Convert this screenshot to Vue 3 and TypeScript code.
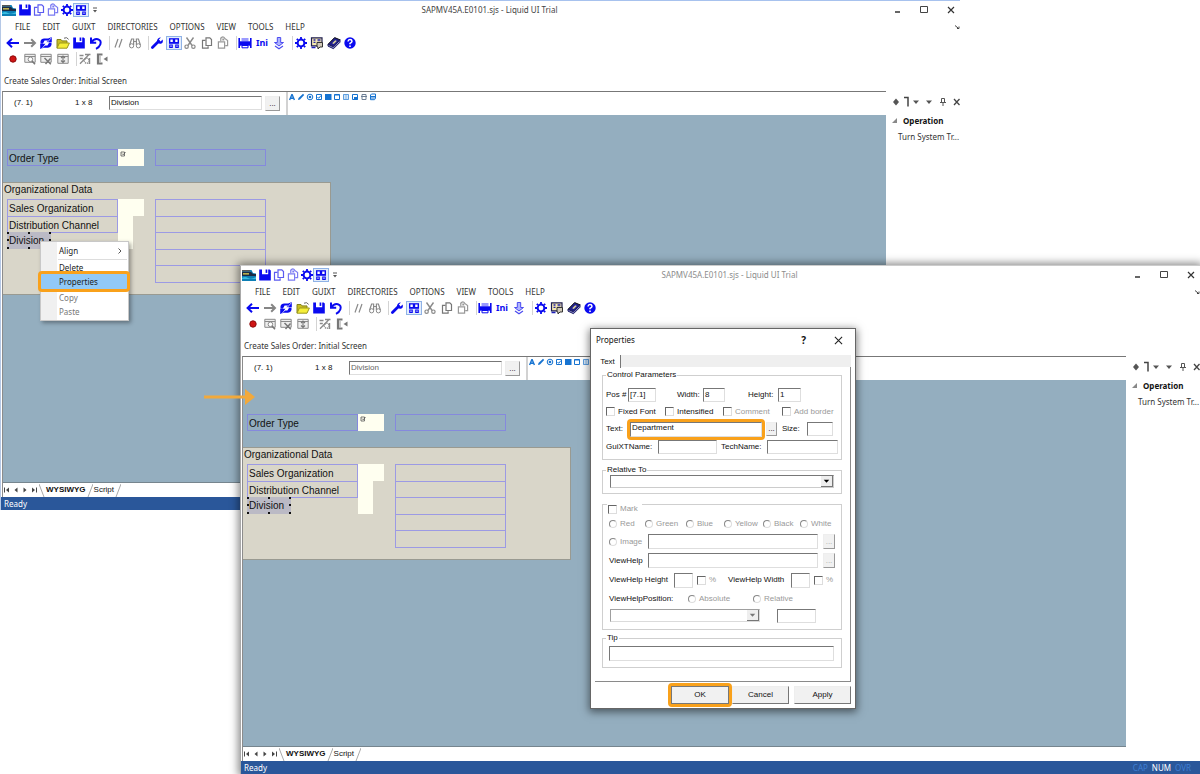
<script setup lang="ts">
import { reactive, ref } from 'vue'

interface AppWindow {
  id: string
  menuOpen: boolean
}

interface FormRow {
  label: string
  size: string
  selected?: boolean
}

const windows: AppWindow[] = [
  { id: 'back', menuOpen: true },
  { id: 'front', menuOpen: false },
]

const menus = ['FILE', 'EDIT', 'GUIXT', 'DIRECTORIES', 'OPTIONS', 'VIEW', 'TOOLS', 'HELP']

const B = '#0a0af0'
const G = '#8a8a8a'

const gear = `<circle cx="8" cy="8" r="3.4" fill="none" stroke="${B}" stroke-width="2"/><path d="M8 2v2M8 12v2M2 8h2M12 8h2M3.8 3.8l1.3 1.3M10.9 10.9l1.3 1.3M3.8 12.2l1.3-1.3M10.9 5.1l1.3-1.3" stroke="${B}" stroke-width="1.8"/>`
const save = `<path d="M2.2 2.500h2.800v4.800h6.200V2.500h1.400l1.200 1v10H2.200z" fill="${B}"/><path d="M8.600 2.500h1.700v3.400H8.600z" fill="${B}"/>`
const copy = (c: string) => `<path d="M7 2.800h3.800l1.700 1.700v6H7z" fill="none" stroke="${c}" stroke-width="1.200"/><path d="M6.500 5.300h-3v7.900h5.600v-2" fill="none" stroke="${c}" stroke-width="1.200"/>`
const paste = (c: string) => `<path d="M5.800 6.200V4.600a2 2 0 0 1 4-1.100l2.800 2v5.200h-2.400" fill="none" stroke="${c}" stroke-width="1.200"/><path d="M3.400 6.800h6.200v6.400H3.400z" fill="none" stroke="${c}" stroke-width="1.200"/><path d="M7.300 3.500h2v2h-2z" fill="${c}"/>`
const grid = `<rect x=".5" y="1.500" width="15" height="13" fill="#e3edfb" stroke="#8fb2e6"/><path d="M3 3.200h10v5.600H3z" fill="${B}"/><path d="M4.400 4.600h2.400v2.400H4.400zM9.200 4.600h2.400v2.400H9.200z" fill="#fff"/><path d="M3.800 10h2.400v2.400H3.800zM9.800 10h2.400v2.400H9.800z" fill="#fff" stroke="${B}" stroke-width="1.200"/>`

const icons: Record<string, string> = {
  app: '<path d="M1 3h14v11H1z" fill="#0d7fb5"/><path d="M1 3h8v1.600H1z" fill="#555"/><path d="M1 5h9l2 2h3v2H1z" fill="#1b2b45"/><path d="M2 6.200h6v1.300H2z" fill="#e3d04f"/><path d="M10.500 3H15v3.500l-3-.5z" fill="#fff"/><path d="M1 11q3-2 6 0t8-1v2H1z" fill="#38bde0"/>',
  save,
  copyBlue: copy('#5b5bf0'),
  pasteBlue: paste('#7a7af2'),
  gear,
  grid,
  back: `<path d="M2 8h12M7 3.800L2.600 8 7 12.200" fill="none" stroke="${B}" stroke-width="2"/>`,
  forward: '<path d="M2 8h11M9.200 4.200L13 8l-3.800 3.800" fill="none" stroke="#858585" stroke-width="2"/>',
  refresh: `<path d="M2.500 8.500V6.200Q3.200 3.500 6.200 3.500h4L13.800 2v5.300H8.400L10 5.600H6.600L5 8.500zM13.500 7.800v2.200q-.8 2.700-3.500 2.700H6L2.200 14V8.800h5.400L6 10.500h3.400l1.700-2.700z" fill="${B}"/><path d="M3.500 14L13.500 2.600" stroke="#fff" stroke-width=".7"/>`,
  open: '<path d="M2 13V4.500h4l1 1.400h5v2" fill="#c9bd22" stroke="#84821a"/><path d="M2 13.200L4.400 8h10L12 13.200z" fill="#f5ee39" stroke="#9b971f"/><path d="M9 3.200q3-1.600 4.600 1.200" fill="none" stroke="#666"/>',
  undo: `<path d="M3 2.500v5.200h5.200M3.400 7.200Q6 3.400 9.800 4.200q3.800 1.200 2.600 5Q11.400 12.200 8 13.800" fill="none" stroke="${B}" stroke-width="2"/>`,
  comment: '<path d="M5 12.500L8 4M9 12.500L12 4" stroke="#8a8a8a" stroke-width="1.200"/>',
  binoculars: `<path d="M2.600 10l2-6h2v6M13.400 10l-2-6h-2v6M6.600 6.500h2.800" fill="none" stroke="${G}" stroke-width="1.200"/><circle cx="4.600" cy="10.800" r="2.100" fill="none" stroke="${G}"/><circle cx="11.400" cy="10.800" r="2.100" fill="none" stroke="${G}"/>`,
  wrench: `<path d="M3.400 12.600l6-6" stroke="${B}" stroke-width="2.800" stroke-linecap="round"/><path d="M12 2.400L9.900 4.600l1.600 1.800 2.200-2q.8 3.600-1.900 4.400-3 .4-3.800-2.200Q7.800 2.600 12 2.400z" fill="${B}"/>`,
  cut: `<path d="M4.500 2.500l5.600 8M11.500 2.500l-5.600 8" stroke="${G}" stroke-width="1.400"/><circle cx="4.600" cy="11.700" r="1.700" fill="none" stroke="${G}" stroke-width="1.200"/><circle cx="11.400" cy="11.700" r="1.700" fill="none" stroke="${G}" stroke-width="1.200"/>`,
  copyGray: copy('#777'),
  pasteGray: paste('#999'),
  print: `<path d="M2.200 3v10M13.800 3v10" stroke="${B}" stroke-width="1.600"/><path d="M4.500 3h7v3.500h-7z" fill="#9a9aff"/><path d="M2 6.300h12v4.400H2z" fill="${B}"/><path d="M5 10.500h6v2.300H5z" fill="#fff" stroke="${B}"/>`,
  download: '<path d="M6.300 2.500h3.400v5h2.800L8 11 3.500 7.500h2.800z" fill="#aeb4ff" stroke="#4b4bf0"/><path d="M4 11l4 2.800 4-2.800" fill="none" stroke="#4b4bf0" stroke-width="1.200"/>',
  guide: '<path d="M2.500 2.800h10.500v8H2.500z" fill="#f5e9b0" stroke="#1d1d50" stroke-width="1.200"/><path d="M4.500 5h2M8.500 5h3M4.500 7.300h2M8.500 7.300h3" stroke="#2323a8" stroke-width="1.300"/><path d="M8 7.500h5.500v4.500H11l-2 2v-2H8z" fill="#d0c8b8" stroke="#333"/><path d="M2.500 12.500h4" stroke="#1f1fb8" stroke-width="1.500"/>',
  book: '<path d="M2 9.300L8.600 2.600l5.400 2.200-6.500 7z" fill="#20208c" stroke="#111"/><path d="M2 9.300v1.800l5.500 2.600L14 7.200V4.800l-6.500 7z" fill="#8d8dd0" stroke="#1a1a60"/><path d="M6.200 8.200l3-3 1.600.800-3 3.100z" fill="#d8cf9a"/>',
  help: `<circle cx="8" cy="8" r="5.700" fill="${B}"/><path d="M6 6.500q.2-1.900 2-1.900t2 1.600q0 1-2 2.200v.9" fill="none" stroke="#fff" stroke-width="1.500"/><path d="M7.200 10.400h1.600V12H7.200z" fill="#fff"/>`,
  record: '<circle cx="8" cy="8" r="3.200" fill="#cf1414" stroke="#8d0b0b"/>',
  find: `<path d="M2.800 3.300h10.400v8H2.800zM2.800 5.500h10.400" fill="#eee" stroke="${G}"/><circle cx="8.400" cy="8.300" r="2.300" fill="#fff" stroke="${G}"/><path d="M10 10l3 3.300" stroke="#777" stroke-width="1.600"/>`,
  findDel: `<path d="M2.800 3.300h10.400v8H2.800zM2.800 5.500h10.400" fill="#eee" stroke="${G}"/><path d="M6.500 7l6.300 6.300M12.500 7.500l-5 5.500" stroke="#777" stroke-width="1.500"/>`,
  transfer: `<path d="M2.800 3.300h10.400v9H2.800zM2.800 5.500h10.400" fill="#eee" stroke="${G}"/><path d="M8 5v6M6 7l2-2 2 2M6 9.500l2 2 2-2" fill="none" stroke="#777" stroke-width="1.100"/>`,
  macro: `<path d="M2.500 4.500h4M8 3.500h5.500M3 12.800L12.500 3" stroke="${G}" stroke-width="1.300"/><circle cx="9.800" cy="9.800" r="2.500" fill="none" stroke="${G}" stroke-width="1.400" stroke-dasharray="1.400 .8"/><path d="M2.800 7.500h3M12.500 7v6" stroke="${G}" stroke-width="1.400"/>`,
  exit: '<path d="M8.500 3.500H4v9h4.500" fill="none" stroke="#777" stroke-width="2.200"/><path d="M13.500 5.500v5L9.500 8z" fill="#777"/><path d="M5 5h2v6H5z" fill="#ccc"/>',
}

const quickIcons = ['save', 'copyBlue', 'pasteBlue', 'gear', 'grid']
const labels: Record<string, string> = {
  save: 'Save', copyBlue: 'Copy', pasteBlue: 'Paste', gear: 'Settings', grid: 'Designer',
  back: 'Back', forward: 'Forward', refresh: 'Refresh', open: 'Open', undo: 'Undo',
  comment: 'Comment', binoculars: 'Find', wrench: 'Tools', cut: 'Cut', copyGray: 'Copy',
  pasteGray: 'Paste', print: 'Print', ini: 'Ini', download: 'Download', guide: 'Guide',
  book: 'Book', help: 'Help', record: 'Record', find: 'Inspect', findDel: 'Remove',
  transfer: 'Transfer', macro: 'Macro', exit: 'Exit',
}

const mainGroups = [
  { cls: 'w6', items: ['back', 'forward', 'refresh', 'open', 'save', 'undo'] },
  { cls: 'w2', items: ['comment', 'binoculars'] },
  { cls: 'w5', items: ['wrench', 'grid', 'cut', 'copyGray', 'pasteGray'] },
  { cls: 'w3', items: ['print', 'ini', 'download'] },
  { cls: 'w4', items: ['gear', 'guide', 'book', 'help'] },
]
const secondGroups = [
  { cls: 'w4', items: ['record', 'find', 'findDel', 'transfer'] },
  { cls: 'w2', items: ['macro', 'exit'] },
]

const controlIcons = [
  '<path d="M4 1.200L1.600 7M4 1.200L6.400 7M2.500 5.200h3" fill="none" stroke="currentColor" stroke-width="1.400"/>',
  '<path d="M1 7l.5-2L6 .8 7.200 2 3 6.500z"/>',
  '<circle cx="4" cy="4" r="2.800" fill="none" stroke="currentColor"/><circle cx="4" cy="4" r="1.300"/>',
  '<path d="M1.500 1.500h5v5h-5zM2.500 4l1.200 1.300L6 2.500" fill="none" stroke="currentColor"/>',
  '<path d="M1 1h6.500v6H1z"/>',
  '<path d="M1.500 1.500h5v5h-5zM1.500 2h5" fill="none" stroke="currentColor"/>',
  '<path d="M1.500 1.500h5v5h-5zM2.500 3h3M2.500 5h3" fill="none" stroke="currentColor" stroke-width=".7"/>',
  '<path d="M1.500 1.500h5v5h-5z" fill="none" stroke="currentColor"/><path d="M3 4h4v2.500H3z"/>',
  '<path d="M2 1.500h4v5H2zM1 3.500h6" fill="none" stroke="#6d7f95"/>',
  '<path d="M1.500 2l1-1h4v4.500l-1 1.200h-4zM2 3.500h4M2 5h4" fill="none" stroke="currentColor"/>',
]

const rows: FormRow[] = [
  { label: 'Sales Organization', size: 'wide' },
  { label: 'Distribution Channel', size: 'narrow' },
  { label: 'Division', size: 'narrow', selected: true },
  { label: '', size: '' },
  { label: '', size: '' },
]

const handles = ['tl', 'tc', 'tr', 'ml', 'mr', 'bl', 'bc', 'br']
const elementText = reactive<Record<string, string>>({ back: 'Division', front: 'Division' })
const props = reactive({ pos: '[7.1]', width: '8', height: '1', text: 'Department' })
const colours = ['Red', 'Green', 'Blue', 'Yellow', 'Black', 'White']
const flags = ref([
  { label: 'Fixed Font', off: false },
  { label: 'Intensified', off: false },
  { label: 'Comment', off: true },
  { label: 'Add border', off: true },
])
</script>

<template>
  <main class="desktop">
    <section v-for="w in windows" :key="w.id" class="window" :class="w.id">
      <header class="titlebar">
        <svg class="ico" viewBox="0 0 16 16" v-html="icons.app"></svg>
        <button v-for="q in quickIcons" :key="q" class="tool" :aria-label="labels[q]">
          <svg class="ico" viewBox="0 0 16 16" v-html="icons[q]"></svg>
        </button>
        <svg class="more" viewBox="0 0 6 6"><path d="M1 1h4" stroke="#555" /><path d="M1 3h4L3 5.500z" fill="#555" /></svg>
        <h1 class="title">SAPMV45A.E0101.sjs - Liquid UI Trial</h1>
        <div class="controls">
          <button aria-label="Minimize"><svg viewBox="0 0 12 12"><path d="M4 8h5" stroke="#333" stroke-width="1.500" /></svg></button>
          <button aria-label="Maximize"><svg viewBox="0 0 12 12"><path d="M2.500 2.500h7v6h-7z" fill="none" stroke="#444" /></svg></button>
          <button aria-label="Close"><svg viewBox="0 0 12 12"><path d="M3 3l6 6M9 3L3 9" stroke="#333" stroke-width="1.200" /></svg></button>
        </div>
      </header>
      <nav class="menubar">
        <button v-for="m in menus" :key="m">{{ m }}</button>
        <svg class="fold" viewBox="0 0 6 6"><path d="M1 1.500l3 2.500M5 2.500v2H3" fill="none" stroke="#444" /></svg>
      </nav>
      <div class="toolbar">
        <div v-for="(g, i) in mainGroups" :key="i" class="tools" :class="g.cls">
          <button v-for="t in g.items" :key="t" class="tool" :aria-label="labels[t]">
            <b v-if="t === 'ini'">Ini</b>
            <svg v-else class="ico" viewBox="0 0 16 16" v-html="icons[t]"></svg>
          </button>
        </div>
      </div>
      <div class="toolbar">
        <div v-for="(g, i) in secondGroups" :key="i" class="tools" :class="g.cls">
          <button v-for="t in g.items" :key="t" class="tool" :aria-label="labels[t]">
            <svg class="ico" viewBox="0 0 16 16" v-html="icons[t]"></svg>
          </button>
        </div>
      </div>
      <p class="caption">Create Sales Order: Initial Screen</p>

      <div class="workspace">
        <div class="editor">
          <div class="elementbar">
            <span class="coord">(7. 1)</span>
            <span class="dims">1 x 8</span>
            <input v-model="elementText[w.id]" class="sunken elname" aria-label="Element text" />
            <button class="raised dots">...</button>
            <div class="palette">
              <svg v-for="(c, i) in controlIcons" :key="i" viewBox="0 0 8 8" fill="currentColor" v-html="c"></svg>
            </div>
          </div>
          <div class="canvas">
            <div class="order">
              <span class="cell">Order Type</span>
              <span class="entry wide"><svg viewBox="0 0 6 6"><path d="M1 1h3.500v4H1zM2 2.500l1.200 1.300L5.500 1" fill="none" stroke="#555" stroke-width=".8" /></svg></span>
              <span class="cell out"></span>
            </div>
            <section class="orgdata">
              <h2>Organizational Data</h2>
              <div class="grid">
                <template v-for="(r, i) in rows" :key="i">
                  <span v-if="r.selected" class="selected">{{ r.label }}<i v-for="h in handles" :key="h" :class="h"></i></span>
                  <span v-else-if="r.label" class="cell">{{ r.label }}</span>
                  <span v-else></span>
                  <span :class="r.size ? ['entry', r.size] : ''"></span>
                  <span class="cell out"></span>
                </template>
              </div>
            </section>
          </div>
          <div class="sheets">
            <button aria-label="First"><svg viewBox="0 0 8 8"><path d="M1.500 1.500v5" stroke="#444" /><path d="M6 1.500v5L3 4z" fill="#444" /></svg></button>
            <button aria-label="Previous"><svg viewBox="0 0 8 8"><path d="M5.500 1.500v5L2.500 4z" fill="#444" /></svg></button>
            <button aria-label="Next"><svg viewBox="0 0 8 8"><path d="M2.500 1.500v5L5.500 4z" fill="#444" /></svg></button>
            <button aria-label="Last"><svg viewBox="0 0 8 8"><path d="M2 1.500v5L5 4z" fill="#444" /><path d="M6.500 1.500v5" stroke="#444" /></svg></button>
            <svg class="edge" viewBox="0 0 6 13"><path d="M0 0l5 13" stroke="#aaa" /></svg>
            <button class="sheet on">WYSIWYG</button>
            <svg class="edge" viewBox="0 0 6 13"><path d="M6 0L1 13" stroke="#aaa" /></svg>
            <button class="sheet">Script</button>
            <svg class="edge" viewBox="0 0 6 13"><path d="M6 0L1 13" stroke="#aaa" /></svg>
          </div>
        </div>
        <aside class="side">
          <div class="sidebar">
            <svg viewBox="0 0 72 12">
              <path d="M7 2.500l3 3.500-3 3.500L4 6z" fill="#555" />
              <path d="M15 1.500h4v9" fill="none" stroke="#444" stroke-width="1.500" />
              <path d="M24 4.500h6L27 8zM37 4.500h6L40 8z" fill="#555" />
              <path d="M52.500 2.500h3v4h-3zM51 6.500h6M54 6.500v3.500" fill="none" stroke="#555" />
              <path d="M65 3l5.500 6M70.500 3L65 9" stroke="#444" stroke-width="1.300" />
            </svg>
          </div>
          <h3><svg viewBox="0 0 6 6"><path d="M6 0v6H0z" fill="#888" /></svg>Operation</h3>
          <p>Turn System Tr...</p>
        </aside>
      </div>
      <footer class="status">
        <span>Ready</span>
        <span class="keys"><i>CAP</i><span>NUM</span><i>OVR</i></span>
      </footer>

      <div v-if="w.menuOpen" class="context">
        <button class="item">Align<svg viewBox="0 0 6 8"><path d="M1.500 1.500L4 4 1.500 6.500" fill="none" stroke="#555" /></svg></button>
        <button class="item cutoff">Delete</button>
        <button class="item hot">Properties</button>
        <button class="item off">Copy</button>
        <button class="item off">Paste</button>
      </div>
    </section>

    <svg class="arrow" viewBox="0 0 52 18"><path d="M0 9h43" stroke="#f2a93b" stroke-width="3" /><path d="M41 1l10 8-10 8z" fill="#f2a93b" /></svg>

    <form class="dialog" @submit.prevent>
      <header>
        <h2>Properties</h2>
        <button type="button" class="q">?</button>
        <button type="button" aria-label="Close"><svg viewBox="0 0 10 10"><path d="M1 1l8 8M9 1L1 9" stroke="#222" stroke-width="1.200" /></svg></button>
      </header>
      <div class="tabstrip"><button type="button">Text</button></div>
      <div class="page">
        <fieldset class="params">
          <legend>Control Parameters</legend>
          <div class="line pos">
            <label for="p-pos">Pos #</label><input id="p-pos" v-model="props.pos" class="sunken" />
            <label for="p-w">Width:</label><input id="p-w" v-model="props.width" class="sunken" />
            <label for="p-h">Height:</label><input id="p-h" v-model="props.height" class="sunken" />
          </div>
          <div class="line checks">
            <label v-for="f in flags" :key="f.label" :class="{ dim: f.off }"><input type="checkbox" :disabled="f.off" />{{ f.label }}</label>
          </div>
          <div class="line text">
            <label for="p-text">Text:</label>
            <span class="ring"><input id="p-text" v-model="props.text" class="sunken" /></span>
            <button type="button" class="raised">...</button>
            <label for="p-size">Size:</label><input id="p-size" class="sunken" />
          </div>
          <div class="line names">
            <label for="p-gx">GuiXTName:</label><input id="p-gx" class="sunken" />
            <label for="p-tn">TechName:</label><input id="p-tn" class="sunken" />
          </div>
        </fieldset>
        <fieldset class="relative">
          <legend>Relative To</legend>
          <div class="drop"><select aria-label="Relative To"><option></option></select><svg viewBox="0 0 12 10"><path d="M3 3.500h6L6 7z" /></svg></div>
        </fieldset>
        <fieldset class="marks">
          <legend class="marklegend"><label class="dim"><input type="checkbox" disabled />Mark</label></legend>
          <div class="line colours">
            <label v-for="c in colours" :key="c" class="dim"><input type="radio" name="colour" disabled />{{ c }}</label>
          </div>
          <div class="line file">
            <label class="dim"><input type="radio" name="colour" disabled />Image</label>
            <input class="sunken" aria-label="Image" disabled /><button type="button" class="raised" disabled>...</button>
          </div>
          <div class="line file">
            <label for="p-vh">ViewHelp</label>
            <input id="p-vh" class="sunken" /><button type="button" class="raised" disabled>...</button>
          </div>
          <div class="line size">
            <label for="p-vhh">ViewHelp Height</label><input id="p-vhh" class="sunken" />
            <label class="dim"><input type="checkbox" disabled />%</label>
            <label for="p-vhw">ViewHelp Width</label><input id="p-vhw" class="sunken" />
            <label class="dim"><input type="checkbox" disabled />%</label>
          </div>
          <div class="line where">
            <span>ViewHelpPosition:</span>
            <label class="dim"><input type="radio" name="where" disabled />Absolute</label>
            <label class="dim"><input type="radio" name="where" disabled />Relative</label>
          </div>
          <div class="line anchor">
            <div class="drop"><select aria-label="ViewHelp position" disabled><option></option></select><svg viewBox="0 0 12 10"><path d="M3 3.500h6L6 7z" fill="#777" /></svg></div>
            <input class="sunken" aria-label="Offset" />
          </div>
        </fieldset>
        <fieldset class="tip">
          <legend>Tip</legend>
          <input class="sunken" aria-label="Tip" />
        </fieldset>
      </div>
      <div class="actions">
        <span class="ring"><button class="raised">OK</button></span>
        <button type="button" class="raised">Cancel</button>
        <button type="button" class="raised">Apply</button>
      </div>
    </form>
  </main>
</template>

<style>
body { margin: 0; background: #fff; }
</style>

<style scoped>
.desktop, .desktop * { box-sizing: border-box; }
.desktop {
  position: relative;
  min-height: 100vh;
  overflow: hidden;
  background: #fff;
  font-family: "Noto Sans", sans-serif;
  font-size: 8px;
  line-height: 12px;
  color: #333;
}
button { margin: 0; padding: 0; border: 0; background: none; font: inherit; color: inherit; }
h1, h2, h3, p { margin: 0; font: inherit; }
svg { display: block; flex: none; }
i { font-style: normal; }

.window { position: absolute; display: flex; flex-direction: column; background: #fff; }
.back { left: 0; top: 0; right: 20%; bottom: 264px; border-top: 1px solid #a7c2ee; border-left: 1px solid #b5c8e6; }
.front { left: 20%; top: 265px; right: 0; bottom: 0; border-top: 1px solid #ccc; border-left: 1px solid #a9a9a9; box-shadow: 0 0 8px 2px rgba(0, 0, 0, 0.45); }

.titlebar { display: flex; align-items: center; height: 17px; padding: 0 3px 0 0; }
.ico { width: 16px; height: 16px; }
.tool { display: flex; align-items: center; justify-content: center; width: 14px; height: 16px; }
.titlebar .tool:nth-of-type(1) { margin-left: 1px; }
.more { width: 6px; height: 6px; margin-left: 4px; }
.title { flex: 1; text-align: center; padding-right: 10px; }
.back .title { color: #444; }
.front .title { color: #8c8c8c; }
.controls { display: flex; gap: 15px; }
.controls svg { width: 12px; height: 12px; }

.menubar { display: flex; align-items: center; gap: 12px; height: 17px; padding-left: 14px; }
.fold { width: 6px; height: 6px; margin-left: auto; }

.toolbar { display: flex; height: 16px; align-items: center; padding-left: 4px; }
.tools { display: flex; justify-content: space-between; height: 14px; align-items: center; }
.tools .tool { width: 16px; }
.tools + .tools { margin-left: 5px; border-left: 1px solid #d3d3d3; }
.w6 { width: 99px; }
.w5 { width: 83px; }
.w4 { width: 66px; }
.w3 { width: 51px; }
.w2 { width: 34px; }
.tool b { color: #0a0af0; font-size: 9px; line-height: 14px; }
.caption { height: 24px; padding: 8px 0 0 3px; }

.workspace { display: flex; flex: 1; min-height: 0; }
.editor { display: flex; flex: 1; flex-direction: column; min-width: 0; margin-left: 1px; border-left: 1px solid #8c8c8c; border-top: 1px solid #777; }
.elementbar { display: flex; height: 23px; flex: none; background: #fff; font-family: "Liberation Sans", sans-serif; color: #111; }
.coord { width: 61px; padding: 5px 0 0 11px; }
.dims { width: 45px; padding: 5px 0 0 11px; }
.sunken { min-width: 0; margin: 0; padding: 0 1px; background: #fff; border: 1px solid #dedede; border-top-color: #777; border-left-color: #777; border-radius: 0; font: 8px/10px "Liberation Sans", sans-serif; color: #111; outline: 0; }
.elname { width: 153px; height: 14px; margin-top: 4px; padding-bottom: 2px; }
.front .elname { color: #666; }
.raised { background: #f1f1f1; border: 1px solid #999; border-top-color: #eee; border-left-color: #eee; line-height: 8px; }
.dots { width: 15px; height: 15px; margin: 4px 0 0 3px; }
.palette { display: flex; gap: 1px; margin-left: 6px; padding: 1px 0 0 0; border-left: 2px solid #d2d2d2; color: #1673d1; }
.palette svg { width: 8px; height: 8px; }

.canvas { flex: 1; min-height: 0; padding-top: 34px; overflow: hidden; background: #94aebf; border-bottom: 1px solid #76858e; font: 10px/17px "Liberation Sans", sans-serif; color: #111; }
.order { display: grid; grid-template-columns: 111px 37px 111px; grid-template-rows: 17px; margin-left: 4px; }
.cell { border: 1px solid #8589dd; padding-left: 1px; white-space: nowrap; }
.entry { background: #fffff0; }
.entry svg { width: 6px; height: 6px; margin: 2px 0 0 2px; }
.wide { width: 26px; }
.narrow { width: 15px; }
.orgdata { width: 328px; height: 113px; margin-top: 16px; background: #d9d6c9; border: 1px solid #999a91; border-left: 0; }
.orgdata h2 { height: 16px; padding-left: 1px; line-height: 13px; }
.grid { display: grid; grid-template-columns: 111px 37px 111px; grid-template-rows: repeat(5, minmax(0, 1fr)); height: 83px; margin-left: 4px; }
.grid .cell { margin-bottom: -1px; border-color: #9c9ae4; }
.selected { position: relative; width: 44px; padding-left: 2px; background: #bbbac5; }
.selected i { position: absolute; width: 2px; height: 2px; background: #111; }
.tl { left: 0; top: 0; }
.tc { left: 21px; top: 0; }
.tr { right: 0; top: 0; }
.ml { left: 0; top: 7px; }
.mr { right: 0; top: 7px; }
.bl { left: 0; bottom: 0; }
.bc { left: 21px; bottom: 0; }
.br { right: 0; bottom: 0; }

.sheets { display: flex; align-items: center; height: 14px; flex: none; font-family: "Liberation Sans", sans-serif; color: #111; }
.sheets button { width: 9px; }
.sheets button svg { width: 8px; height: 8px; }
.sheets .sheet { width: auto; padding: 0 1px; }
.sheets .on { font-weight: bold; }
.edge { width: 6px; height: 13px; }

.side { width: 74px; flex: none; padding: 5px 0 0 6px; white-space: nowrap; }
.sidebar svg { width: 72px; height: 12px; margin-left: -3px; }
.side h3 { display: flex; align-items: center; gap: 6px; height: 15px; margin-top: 5px; font-weight: bold; color: #111; }
.side h3 svg { width: 5px; height: 5px; }
.side p { padding: 3px 0 0 6px; }

.status { display: flex; justify-content: space-between; align-items: center; height: 13px; flex: none; padding: 0 9px 0 3px; background: #2a579a; color: #fff; }
.keys { display: flex; gap: 4px; }
.back .keys { display: none; }
.keys i { color: #3f7fd4; }

.context { position: absolute; left: 39px; top: 240px; display: flex; flex-direction: column; width: 89px; padding: 1px; background: linear-gradient(90deg, #f0f0f0 16px, #fff 16px); border: 1px solid #c8c8c8; box-shadow: 2px 2px 4px rgba(0, 0, 0, 0.35); color: #222; }
.item { display: flex; align-items: center; justify-content: space-between; height: 15px; padding: 0 4px 0 17px; text-align: left; }
.item svg { width: 6px; height: 8px; }
.cutoff { height: 14px; margin: 1px 0 0 16px; padding: 3px 0 0 1px; border-top: 1px solid #ddd; }
.hot { position: relative; height: 21px; margin: -2px -3px -1px -4px; padding-left: 18px; background: #91c9f7; border: 3px solid #f9a11b; border-radius: 4px; }
.off { height: 14px; color: #777; }

.arrow { position: absolute; left: 204px; top: 388px; width: 52px; height: 18px; }

.dialog { position: absolute; left: 590px; top: 328px; width: 266px; padding: 0 4px 1px 4px; background: #fff; border: 1px solid #666; box-shadow: 0 2px 8px 1px rgba(0, 0, 0, 0.5); font-family: "Liberation Sans", sans-serif; line-height: 10px; color: #111; }
.dialog header { display: flex; align-items: center; height: 26px; padding: 0 8px 4px 1px; font-family: "Noto Sans", sans-serif; }
.dialog header h2 { flex: 1; }
.dialog header svg { width: 9px; height: 9px; }
.q { margin-right: 28px; font-size: 10px; font-weight: bold; }
.tabstrip { height: 12px; background: #efefef; }
.tabstrip button { display: block; width: 26px; height: 13px; background: #fff; border-right: 1px solid #777; text-align: center; }
.page { padding: 3px 8px 13px 7px; border-right: 1px solid #8a8a8a; border-bottom: 1px solid #8a8a8a; }
fieldset { min-width: 0; margin: 0; padding: 0; border: 1px solid #cfcfcf; }
legend { height: 10px; padding: 0 1px; }
.line { display: grid; grid-template-rows: 100%; align-items: center; white-space: nowrap; }
.dialog label { display: flex; align-items: center; }
.dim { color: #999; }
input[type="checkbox"], input[type="radio"] { appearance: none; width: 9px; height: 9px; margin: 0 3px 0 0; flex: none; border: 1px solid #ddd; border-top-color: #666; border-left-color: #666; background: #fff; }
input[type="radio"] { width: 8px; height: 8px; border-radius: 50%; border-color: #888 #ddd #ddd #888; }
.params { padding: 7px 5px 3px 3px; }
.pos { grid-template-columns: 22px 49px 26px 45px 30px 23px; height: 16px; }
.pos .sunken { height: 14px; padding-bottom: 2px; }
.pos .sunken:nth-of-type(1) { width: 28px; }
.pos .sunken:nth-of-type(2) { width: 22px; }
.checks { grid-template-columns: 59px 58px 59px 1fr; height: 17px; }
.text { grid-template-columns: 20px 138px 11px 28px 26px; gap: 0 1px; height: 18px; }
.text label:nth-of-type(2) { padding-left: 4px; }
.text .sunken { width: 100%; height: 14px; }
.ring { display: block; border: 3px solid #f9a11b; border-radius: 4px; }
.text .ring { height: 21px; z-index: 1; }
.text .ring .sunken { display: block; height: 15px; padding-bottom: 3px; }
.text .raised { height: 14px; }
.names { grid-template-columns: 52px 59px 50px 71px; height: 18px; }
.names label:nth-of-type(2) { padding-left: 4px; }
.names .sunken { height: 14px; }
.relative { margin-top: 5px; padding: 0 7px 5px; }
.relative legend { margin-left: -4px; }
.drop { position: relative; height: 13px; }
.drop select { display: block; width: 100%; height: 100%; appearance: none; background: #fff; border: 1px solid #ccc; border-top-color: #777; border-left-color: #777; border-radius: 0; }
.drop svg { position: absolute; right: 1px; top: 1px; width: 12px; height: 11px; background: #eee; border-right: 1px solid #777; border-bottom: 1px solid #777; }
.marks { padding: 2px 6px 5px; }
.marklegend { display: flex; align-items: flex-end; height: 20px; margin-left: -2px; padding-right: 4px; }
.colours { grid-template-columns: 36px 41px 38px 39px 37px 1fr; height: 16px; }
.file { grid-template-columns: 39px 170px 12px; height: 19px; }
.file .sunken { height: 15px; }
.file .raised { width: 12px; height: 15px; margin-left: 5px; color: #aaa; }
.size { grid-template-columns: 65px 23px 31px 63px 23px 1fr; height: 20px; }
.size .sunken { width: 19px; height: 15px; }
.where { grid-template-columns: 79px 65px 1fr; height: 18px; }
.anchor { grid-template-columns: 150px 39px; column-gap: 17px; align-items: start; height: 16px; padding: 1px 0 0 1px; }
.anchor .sunken { height: 14px; }
.tip { margin-top: 3px; padding: 3px 7px 6px 6px; }
.tip legend { margin-left: -3px; }
.tip .sunken { display: block; width: 100%; height: 15px; }
.actions { display: flex; justify-content: flex-end; align-items: center; height: 25px; gap: 5px; }
.actions .raised { width: 57px; height: 18px; border-right-color: #777; border-bottom-color: #777; }
.actions .ring { margin-right: -5px; z-index: 1; }
.actions .ring .raised { display: block; width: 58px; border: 1px solid #777; }
</style>
